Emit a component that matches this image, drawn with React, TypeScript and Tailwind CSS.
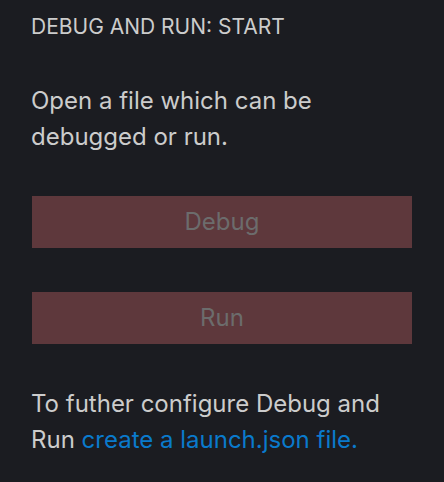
export default function App() {
  return (
    <div
      className="h-[482px] w-[444px] bg-[#1b1c21] pl-[31px] pr-8 pt-[13px] text-[#cccccc]"
      style={{ fontFamily: 'Inter, "Noto Sans", sans-serif' }}
    >
      {/* 标题 */}
      <div className="text-[21px] leading-[28px]">DEBUG AND RUN: START</div>

      <p className="mt-[42px] text-[24px] leading-[36px]">
        Open a file which can be
        <br />
        debugged or run.
      </p>

      <div className="ml-px mt-[41px] flex w-[380px] flex-col gap-[44px]">
        <button className="flex h-[52px] items-center justify-center bg-[#5e383c] text-[24px] text-[#6c6c6c]">
          Debug
        </button>
        <button className="flex h-[52px] items-center justify-center bg-[#5e383c] text-[24px] text-[#6c6c6c]">
          Run
        </button>
      </div>

      <p className="mt-[42px] text-[24px] leading-[36px]">
        To futher configure Debug and
        <br />
        Run <span className="text-[#0a7acc]">create a launch.json file.</span>
      </p>
    </div>
  );
}
